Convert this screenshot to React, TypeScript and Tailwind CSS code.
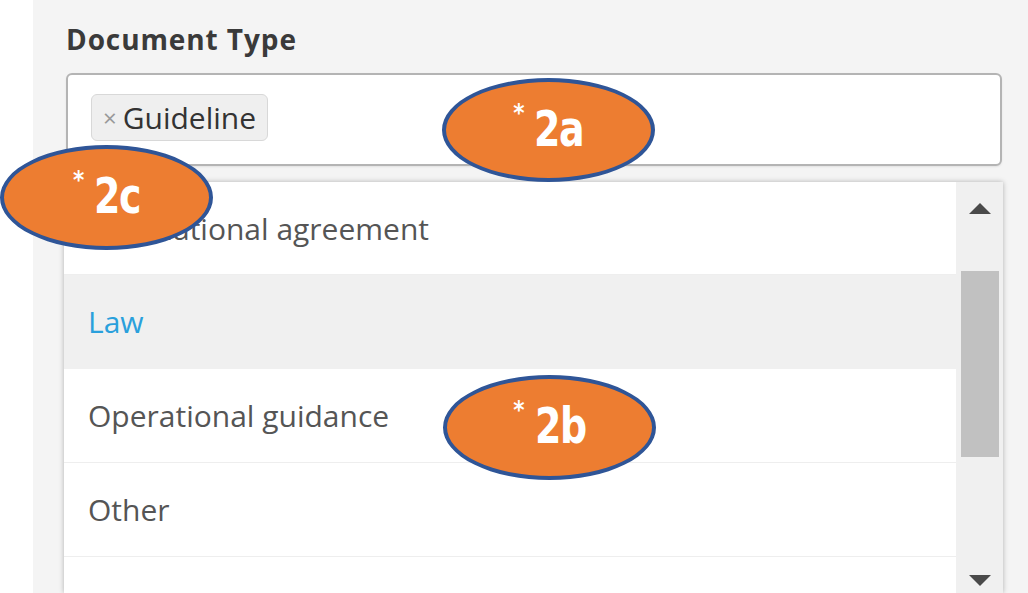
import React from "react";

function Badge({ label, className }: { label: string; className: string }) {
  return (
    <div
      className={`absolute flex items-center justify-center rounded-[50%] bg-[#ED7D31] border-4 border-[#2F5597] ${className}`}
    >
      <div
        className="flex items-start text-white font-bold leading-none -mt-[2px]"
        style={{ fontFamily: '"DejaVu Sans Condensed", "DejaVu Sans", sans-serif', fontStretch: "condensed" }}
      >
        <span className="text-[24px] mt-[-4px] mr-[10px]">*</span>
        <span className="inline-block text-[49px] tracking-[-1.5px] scale-x-[0.86] origin-left -mr-[8px]">{label}</span>
      </div>
    </div>
  );
}

export default function App() {
  const rows = [
    { t: "International agreement", h: "h-[93px]" },
    { t: "Law", h: "h-[94px]", active: true },
    { t: "Operational guidance", h: "h-[94px]" },
    { t: "Other", h: "h-[94px]" },
    { t: "", h: "h-[94px]" },
  ];
  return (
    <div
      className="relative w-[1028px] h-[593px] overflow-hidden bg-white flex"
      style={{ fontFamily: '"Open Sans", "Noto Sans", sans-serif' }}
    >
      <div className="w-[33px] bg-white" />
      <div className="flex-1 bg-[#f4f4f4] pl-[33px] pr-[26px] flex flex-col">
        <div className="pt-[21px] text-[28px] leading-[36px] font-bold text-[#3a3a3a] tracking-[0.9px]">
          Document Type
        </div>
        <div className="mt-[16px] h-[93px] border-2 border-[#b4b4b4] rounded-[6px] bg-white pt-[19px] pl-[23px] shadow-[0_1px_2px_rgba(0,0,0,0.08)]">
          <div className="inline-flex items-center h-[47px] pl-[11px] pr-[11px] rounded-[6px] border border-[#d8d8d8] bg-[#efefef]">
            <span className="text-[24px] text-[#999] leading-none mr-[6px]">×</span>
            <span className="text-[30px] text-[#333] leading-none">Guideline</span>
          </div>
        </div>
        <div className="mt-[16px] -ml-[2px] -mr-[1px] flex-1 flex bg-white shadow-[0_0_5px_rgba(0,0,0,0.28)] overflow-hidden">
          <div className="flex-1 flex flex-col">
            {rows.map((r, i) => (
              <div
                key={i}
                className={`${r.h} shrink-0 flex items-center pl-[24px] border-b border-[#eeeeee] text-[30px] ${
                  r.active ? "bg-[#f0f0f0] text-[#2aa0dc] border-[#f0f0f0]" : "text-[#555555]"
                }`}
              >
                {r.t}
              </div>
            ))}
          </div>
          <div className="w-[47px] bg-[#f0f0f0] flex flex-col items-center">
            <div className="mt-[21px] w-0 h-0 border-l-[11px] border-r-[11px] border-b-[11px] border-l-transparent border-r-transparent border-b-[#4a4a4a]" />
            <div className="mt-[57px] w-[38px] h-[186px] bg-[#c1c1c1]" />
            <div className="mt-[118px] w-0 h-0 border-l-[11px] border-r-[11px] border-t-[11px] border-l-transparent border-r-transparent border-t-[#4a4a4a]" />
          </div>
        </div>
      </div>

      <Badge label="2a" className="left-[442px] top-[78px] w-[213px] h-[104px]" />
      <Badge label="2c" className="left-[0px] top-[145px] w-[213px] h-[105px]" />
      <Badge label="2b" className="left-[443px] top-[375px] w-[213px] h-[105px]" />
    </div>
  );
}
